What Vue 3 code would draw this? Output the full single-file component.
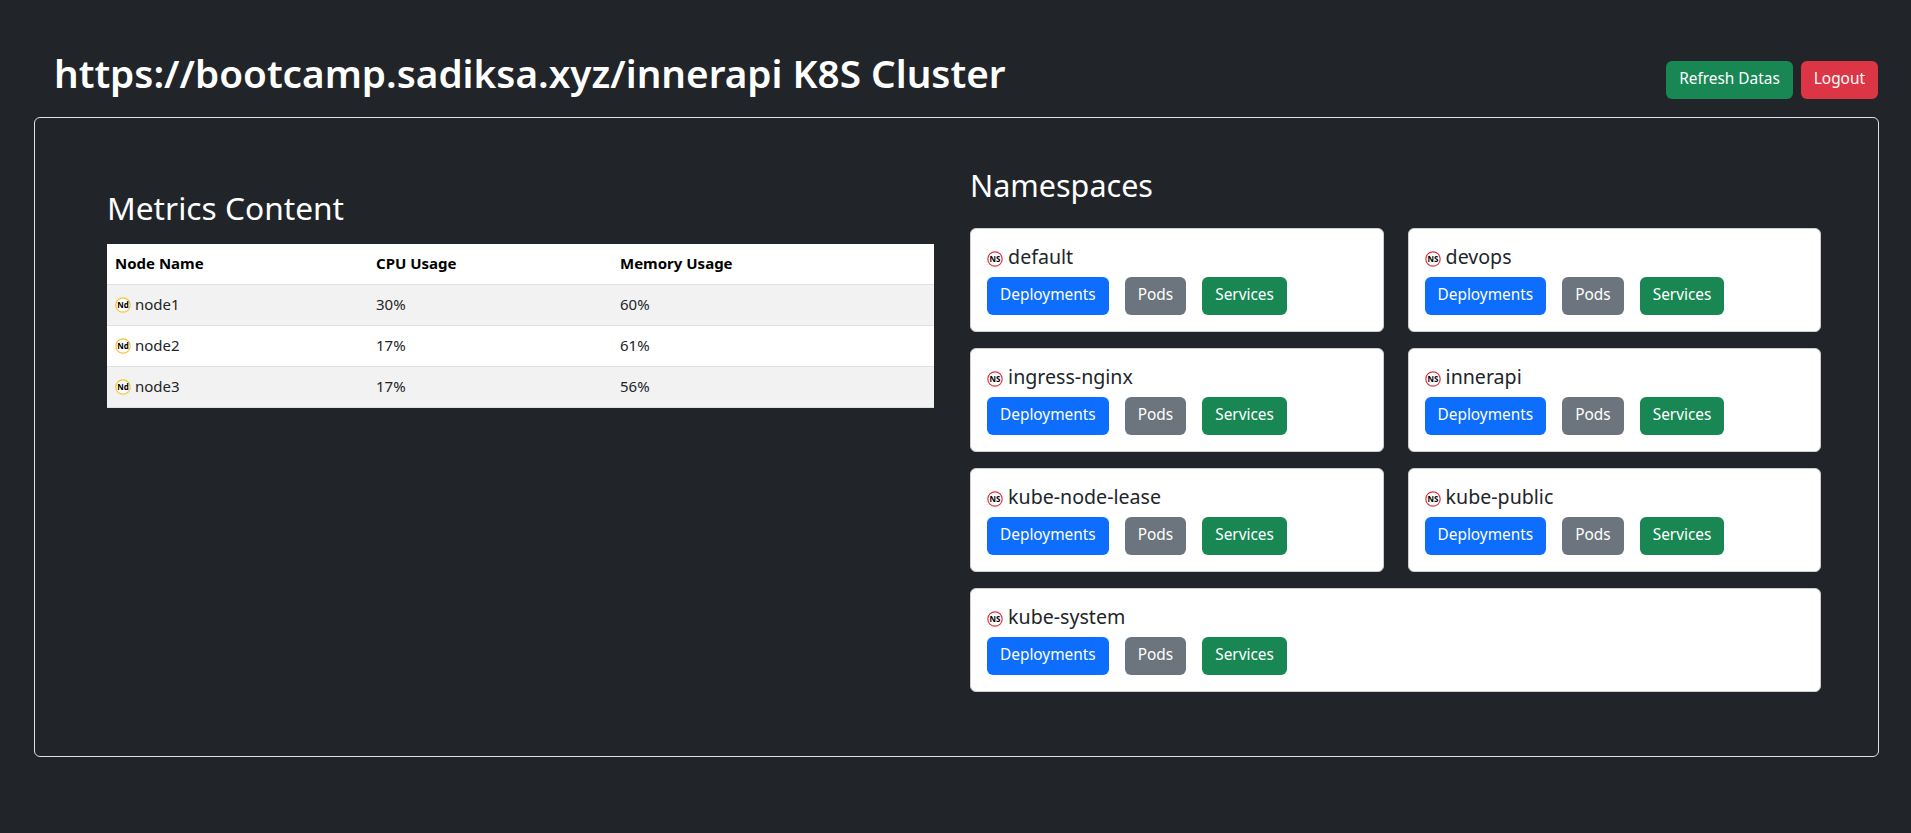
<script setup>
const nodes = [
  { name: 'node1', cpu: '30%', memory: '60%' },
  { name: 'node2', cpu: '17%', memory: '61%' },
  { name: 'node3', cpu: '17%', memory: '56%' },
];

const namespaces = [
  'default',
  'devops',
  'ingress-nginx',
  'innerapi',
  'kube-node-lease',
  'kube-public',
  'kube-system',
];
</script>

<template>
  <div class="page">
    <header class="header">
      <h1 class="title">https://bootcamp.sadiksa.xyz/innerapi K8S Cluster</h1>
      <div class="actions">
        <button class="btn btn-green">Refresh Datas</button>
        <button class="btn btn-red">Logout</button>
      </div>
    </header>

    <main class="panel">
      <section class="metrics">
        <h2 class="metrics-title">Metrics Content</h2>
        <table class="table">
          <thead>
            <tr>
              <th class="col-name">Node Name</th>
              <th class="col-cpu">CPU Usage</th>
              <th>Memory Usage</th>
            </tr>
          </thead>
          <tbody>
            <tr v-for="node in nodes" :key="node.name">
              <td>
                <svg class="icon" viewBox="0 0 16 16">
                  <circle cx="8" cy="8" r="7.2" fill="#fff" stroke="#fdc02f" stroke-width="1.2" />
                  <text x="8" y="10.8" text-anchor="middle" class="icon-text">Nd</text>
                </svg>
                {{ node.name }}
              </td>
              <td>{{ node.cpu }}</td>
              <td>{{ node.memory }}</td>
            </tr>
          </tbody>
        </table>
      </section>

      <section class="namespaces">
        <h2 class="namespaces-title">Namespaces</h2>
        <div class="cards">
          <div v-for="ns in namespaces" :key="ns" class="card">
            <h5 class="card-title">
              <svg class="icon" viewBox="0 0 16 16">
                <circle cx="8" cy="8" r="7.2" fill="#fff" stroke="#dc3545" stroke-width="1.2" />
                <text x="8" y="10.8" text-anchor="middle" class="icon-text">NS</text>
              </svg>
              {{ ns }}
            </h5>
            <div class="card-actions">
              <button class="btn btn-blue">Deployments</button>
              <button class="btn btn-gray">Pods</button>
              <button class="btn btn-green">Services</button>
            </div>
          </div>
        </div>
      </section>
    </main>
  </div>
</template>

<style>
html,
body {
  background: #212529;
}
</style>

<style scoped>
.page {
  box-sizing: border-box;
  height: 833px;
  padding: 49px 32px 0 34px;
  font-family: "Noto Sans", sans-serif;
  font-size: 16px;
  line-height: 24px;
  color: #fff;
  background: #212529;
}

.header {
  display: flex;
  justify-content: space-between;
  align-items: flex-start;
  margin-bottom: 18px;
}

.title {
  margin: 0 0 0 20px;
  font-size: 38.7px;
  line-height: 48px;
  font-weight: 600;
}

.actions {
  display: flex;
  gap: 8px;
  margin-top: 12px;
  margin-right: 1px;
}

.btn {
  box-sizing: border-box;
  height: 38px;
  padding: 5px 12px 7px;
  border: 1px solid transparent;
  border-radius: 6px;
  font: inherit;
  font-size: 15.4px;
  color: #fff;
}

.btn-green {
  background: #198754;
}

.btn-red {
  background: #dc3545;
}

.btn-blue {
  background: #0d6efd;
}

.btn-gray {
  background: #6c757d;
}

.panel {
  box-sizing: border-box;
  display: flex;
  height: 640px;
  padding: 0 57px 0 72px;
  gap: 36px;
  border: 1px solid #dee2e6;
  border-radius: 6px;
}

.metrics {
  width: 827px;
  flex: none;
}

.metrics-title {
  margin: 71px 0 17px;
  font-size: 31.7px;
  line-height: 38px;
  font-weight: 400;
}

.table {
  width: 100%;
  border-collapse: collapse;
  background: #fff;
  color: #212529;
  font-size: 15px;
}

.table th,
.table td {
  padding: 7px 8px 9px;
  height: 24px;
  border-bottom: 1px solid #dee2e6;
  text-align: left;
}

.table th {
  font-weight: 700;
  color: #000;
}

.col-name {
  width: 245px;
}

.col-cpu {
  width: 228px;
}

.table tbody tr:nth-child(odd) {
  background: #f2f2f2;
}

.icon {
  width: 16px;
  height: 16px;
  vertical-align: -3px;
}

.icon-text {
  font-size: 8px;
  font-weight: 700;
  fill: #000;
}

.namespaces {
  flex: 1;
}

.namespaces-title {
  margin: 48px 0 24px;
  font-size: 30.5px;
  line-height: 38px;
  font-weight: 400;
}

.cards {
  display: grid;
  grid-template-columns: 1fr 1fr;
  gap: 16px 24px;
}

.card {
  box-sizing: border-box;
  height: 104px;
  padding: 16px;
  border: 1px solid #ccc;
  border-radius: 6px;
  background: #fff;
  color: #212529;
}

.card:last-child {
  grid-column: span 2;
}

.card-title {
  margin: 0 0 8px;
  font-size: 19.6px;
  line-height: 24px;
  font-weight: 400;
}

.card-actions {
  display: flex;
  gap: 16px;
}
</style>
